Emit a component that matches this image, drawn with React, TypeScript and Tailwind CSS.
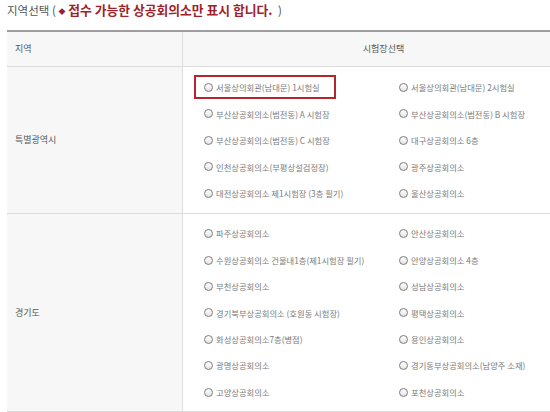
const font = { fontFamily: '"Noto Sans CJK KR", "Noto Sans", sans-serif' };

interface Region {
  name: string;
  rowH: string;
  left: string[];
  right: string[];
}

const regions: Region[] = [
  {
    name: '특별광역시',
    rowH: 'h-[26.5px]',
    left: [
      '서울상의회관(남대문) 1시험실',
      '부산상공회의소(범전동) A 시험장',
      '부산상공회의소(범전동) C 시험장',
      '인천상공회의소(부평상설검정장)',
      '대전상공회의소 제1시험장 (3층 필기)',
    ],
    right: [
      '서울상의회관(남대문) 2시험실',
      '부산상공회의소(범전동) B 시험장',
      '대구상공회의소 6층',
      '광주상공회의소',
      '울산상공회의소',
    ],
  },
  {
    name: '경기도',
    rowH: 'h-[26.4px]',
    left: [
      '파주상공회의소',
      '수원상공회의소 건물내1층(제1시험장 필기)',
      '부천상공회의소',
      '경기북부상공회의소 (호원동 시험장)',
      '화성상공회의소7층(병점)',
      '광명상공회의소',
      '고양상공회의소',
    ],
    right: [
      '안산상공회의소',
      '안양상공회의소 4층',
      '성남상공회의소',
      '평택상공회의소',
      '용인상공회의소',
      '경기동부상공회의소(남양주 소재)',
      '포천상공회의소',
    ],
  },
];

const Radio = ({ label, h, selected }: { label: string; h: string; selected?: boolean }) => (
  <div className={`relative flex items-center ${h} whitespace-nowrap`}>
    {selected && (
      <div className="absolute left-[-10px] top-[1px] w-[142px] h-[24px] border-2 border-[#b3262e]" />
    )}
    <span className="w-[9px] h-[9px] rounded-full border border-[#7c7c7c] bg-gradient-to-b from-white to-[#e4e4e4] mr-[3px] shrink-0" />
    <span className="text-[8.3px] text-[#7a7a7a]">{label}</span>
  </div>
);

const App = () => {
  return (
    <div className="w-[550px] h-[412px] overflow-hidden bg-white" style={font}>
      <div className="h-[30px] pl-[7px] pt-[1px] text-[11.5px] text-[#555] leading-[18px] whitespace-nowrap">
        지역선택 ({' '}
        <span className="font-bold text-[#a11f2b] text-[12.8px]">
          <span className="text-[7px] align-[1px]">◆</span> 접수 가능한 상공회의소만 표시 합니다.
        </span>
        {'  '}
        <span className="ml-[3px]">)</span>
      </div>

      <div className="ml-[7px] w-[577px] border-t-2 border-[#9e9e9e]">
        <div className="flex h-[35px] bg-[#f7f7f7] border-b border-[#dcdcdc] text-[9px] text-[#555]">
          <div className="w-[176px] flex items-center pl-[8px] border-r border-[#dcdcdc]">지역</div>
          <div className="flex-1 flex items-center justify-center">시험장선택</div>
        </div>

        {regions.map((r) => (
          <div key={r.name} className="flex border-b border-[#dcdcdc]">
            <div className="w-[176px] flex items-center pl-[8px] bg-[#f7f7f7] border-r border-[#dcdcdc] text-[9px] text-[#555]">
              {r.name}
            </div>
            <div className="flex-1 grid grid-cols-[195px_1fr] pl-[21px] pt-[7px] pb-[6px]">
              <div className="flex flex-col">
                {r.left.map((l, i) => (
                  <Radio key={l} label={l} h={r.rowH} selected={r.name === '특별광역시' && i === 0} />
                ))}
              </div>
              <div className="flex flex-col">
                {r.right.map((l) => (
                  <Radio key={l} label={l} h={r.rowH} />
                ))}
              </div>
            </div>
          </div>
        ))}
      </div>
    </div>
  );
};

export default App;
